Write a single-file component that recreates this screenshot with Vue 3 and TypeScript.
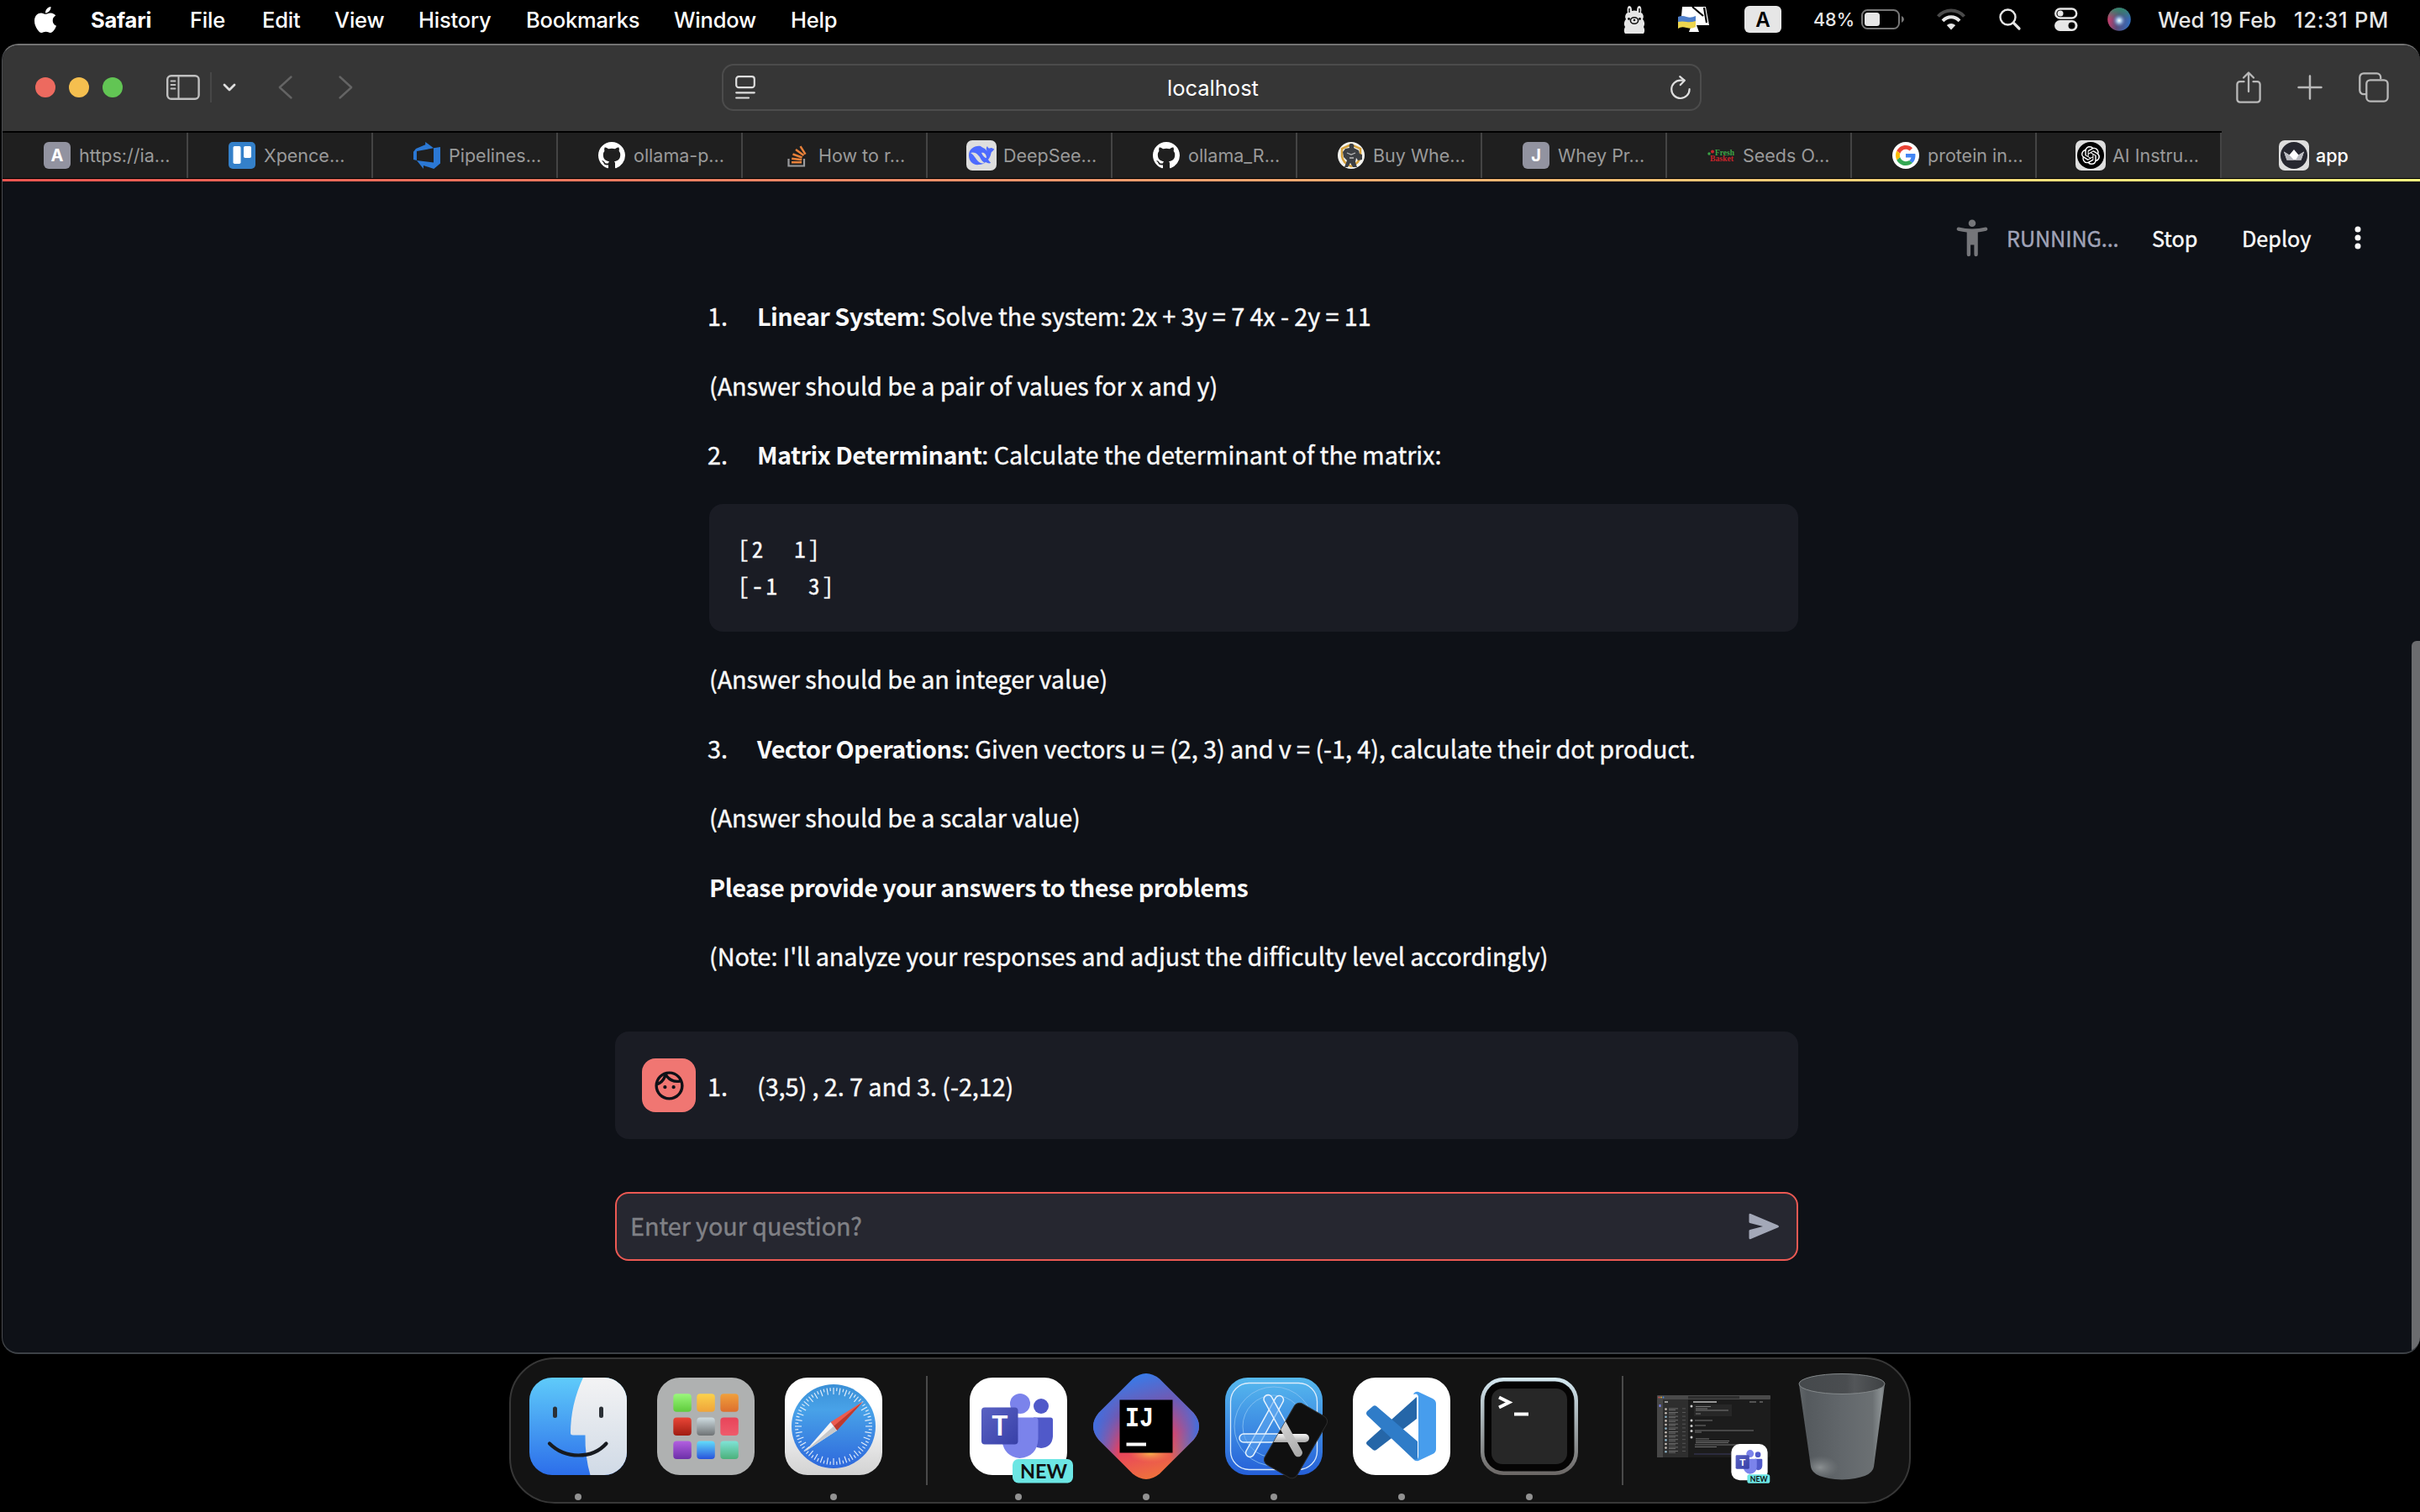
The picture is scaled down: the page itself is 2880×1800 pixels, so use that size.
<script setup lang="ts">
type TabIcon = 'letter' | 'trello' | 'azure' | 'github' | 'stack' | 'deepseek' | 'gym' | 'fresh' | 'google' | 'openai' | 'crown'

interface Tab {
  title: string
  icon: TabIcon
  letter?: string
  active?: boolean
}

const menus: string[] = ['Safari', 'File', 'Edit', 'View', 'History', 'Bookmarks', 'Window', 'Help']

const tabs: Tab[] = [
  { title: 'https://ia...', icon: 'letter', letter: 'A' },
  { title: 'Xpence...', icon: 'trello' },
  { title: 'Pipelines...', icon: 'azure' },
  { title: 'ollama-p...', icon: 'github' },
  { title: 'How to r...', icon: 'stack' },
  { title: 'DeepSee...', icon: 'deepseek' },
  { title: 'ollama_R...', icon: 'github' },
  { title: 'Buy Whe...', icon: 'gym' },
  { title: 'Whey Pr...', icon: 'letter', letter: 'J' },
  { title: 'Seeds O...', icon: 'fresh' },
  { title: 'protein in...', icon: 'google' },
  { title: 'AI Instru...', icon: 'openai' },
  { title: 'app', icon: 'crown', active: true },
]

const ticks = Array.from({ length: 72 }, (_, i) => ({ angle: i * 5, long: i % 2 === 0 }))

const launchColors: [string, string][] = [
  ['#9bf77c', '#5fcb3c'], ['#fbd24c', '#efa43a'], ['#f0a03c', '#dd6f2e'],
  ['#ea4637', '#a01d12'], ['#cfdde2', '#6f7375'], ['#e8445a', '#ee5b6b'],
  ['#b25fe0', '#6c2fa8'], ['#62dcfb', '#2752dc'], ['#7fe3d6', '#4bb07a'],
]

const matrix = '[2  1]\n[-1  3]'
</script>

<template>
  <div class="desktop">
    <header class="menubar">
      <svg class="apple" viewBox="4 32 376 448" preserveAspectRatio="none"><path fill="#fff" d="M318.7 268.7c-.2-36.7 16.4-64.4 50-84.8-18.8-26.9-47.2-41.7-84.7-44.6-35.5-2.8-74.3 20.7-88.5 20.7-15 0-49.4-19.7-76.4-19.7C63.3 141.2 4 184.8 4 273.5q0 39.3 14.4 81.2c12.8 36.7 59 126.7 107.2 125.2 25.2-.6 43-17.9 75.8-17.9 31.8 0 48.3 17.9 76.4 17.9 48.6-.7 90.4-82.5 102.6-119.3-65.2-30.7-61.7-90-61.7-91.9zm-56.6-164.2c27.3-32.4 24.8-61.9 24-72.5-24.1 1.4-52 16.4-67.9 34.9-17.5 19.8-27.8 44.3-25.6 71.9 26.1 2 49.9-11.4 69.5-34.3z" /></svg>
      <nav class="menus">
        <span v-for="m in menus" :key="m" class="menu">{{ m }}</span>
      </nav>
      <div class="status">
        <svg width="26" height="34" viewBox="0 0 26 34">
          <path fill="#e6e6e6" d="M2 34c-2-3-1-6 0-8-2-3-1-7 1-9C1 13 3 10 5 9 4 5 5 1 7 1c2 0 3 2 3 6q3-1 6 0c0-4 1-6 3-6 2 0 3 4 2 8 2 1 4 4 2 8 2 2 3 6 1 9 1 2 2 5 0 8z" />
          <path d="M7 4v5M19 4v5" stroke="#222" stroke-width="1.6" />
          <ellipse cx="13" cy="18.500" rx="4.600" ry="3.700" fill="none" stroke="#111" stroke-width="1.600" />
          <circle cx="13" cy="18" r="1.300" fill="#111" /><circle cx="6.500" cy="16.500" r="1.400" fill="#111" /><circle cx="19.500" cy="16.500" r="1.400" fill="#111" />
        </svg>
        <svg width="38" height="32" viewBox="0 0 38 32">
          <path fill="#fff" d="M5 1h28l4 22H3z" />
          <path fill="#fff" d="M16 23h6l3 8H13z" />
          <path d="M17 1l13 11M31 2l3 18" stroke="#000" stroke-width="2.200" fill="none" />
          <path fill="#4f7fc9" d="M0 13q5-2 10 0t11-1v7q-5 3-11 1t-10 0z" />
          <path fill="#ecd54e" d="M0 19q5-1 10 0t11-1v7q-5 3-11 1t-10 1z" />
        </svg>
        <span class="input-source">A</span>
        <span class="percent">48%</span>
        <svg width="52" height="24" viewBox="0 0 52 24">
          <rect x="1" y="1" width="44" height="22" rx="6.500" fill="none" stroke="#767676" stroke-width="2" />
          <rect x="4" y="4" width="18" height="16" rx="3.500" fill="#e6e6e6" />
          <path d="M48 8q3 1.500 3 4t-3 4z" fill="#767676" />
        </svg>
        <svg width="34" height="26" viewBox="0 0 34 26" fill="none" stroke-width="4">
          <path d="M1.500 9.500q6.500-7 15.500-7t15.500 7" stroke="#4a4a4a" />
          <path d="M7 14.800q4.500-4.500 10-4.500t10 4.500" stroke="#e6e6e6" />
          <path d="M17 25.500l-5.200-5.600q5.200-4 10.400 0z" fill="#e6e6e6" />
        </svg>
        <svg width="26" height="26" viewBox="0 0 26 26" fill="none" stroke="#e6e6e6">
          <circle cx="10.500" cy="10.500" r="9" stroke-width="2.400" /><path d="M17.200 17.200l6.800 6.800" stroke-width="3.200" stroke-linecap="round" />
        </svg>
        <svg width="28" height="28" viewBox="0 0 28 28">
          <rect x="1.200" y="1.500" width="25" height="11" rx="5.500" fill="none" stroke="#e6e6e6" stroke-width="2.400" /><circle cx="7" cy="7" r="3.500" fill="#e6e6e6" />
          <rect x="0" y="15" width="27.500" height="13" rx="6.500" fill="#e6e6e6" /><circle cx="20.500" cy="21.500" r="4" fill="#000" />
        </svg>
        <svg width="28" height="28" viewBox="0 0 28 28">
          <defs>
            <radialGradient id="siri"><stop offset="0" stop-color="#fff" /><stop offset=".35" stop-color="#a9cdee" stop-opacity=".9" /><stop offset="1" stop-color="#4c6fb0" stop-opacity="0" /></radialGradient>
            <linearGradient id="siribg" x1="0" y1=".4" x2="1" y2=".6"><stop offset="0" stop-color="#d23f6c" /><stop offset=".45" stop-color="#5c4a78" /><stop offset="1" stop-color="#2f6fc0" /></linearGradient>
            <linearGradient id="sirig" x1="0" y1="0" x2="0" y2="1"><stop offset="0" stop-color="#2f8a6c" /><stop offset=".5" stop-color="#2f8a6c" stop-opacity="0" /></linearGradient>
          </defs>
          <circle cx="14" cy="14" r="13.800" fill="url(#siribg)" /><circle cx="14" cy="14" r="13.800" fill="url(#sirig)" /><circle cx="14" cy="15.500" r="8" fill="url(#siri)" />
        </svg>
        <span class="clock">Wed 19 Feb</span>
        <span class="clock time">12:31 PM</span>
      </div>
    </header>

    <section class="window">
      <div class="toolbar">
        <div class="lights"><i class="red" /><i class="yellow" /><i class="green" /></div>
        <div class="nav-tools">
          <svg width="40" height="30" viewBox="0 0 40 30" fill="none" stroke="#c0c0c0"><rect x="1.200" y="1.200" width="37.400" height="27.600" rx="4.500" stroke-width="2.400" /><path d="M14.500 1v28" stroke-width="2" /><path d="M5.500 7.500h5M5.500 12h5M5.500 16.500h5" stroke-width="1.800" stroke-linecap="round" /></svg>
          <i class="rule" />
          <svg width="16" height="10" viewBox="0 0 16 10" fill="none" stroke="#dedede" stroke-width="2.800" stroke-linecap="round" stroke-linejoin="round"><path d="M2 2l6 6 6-6" /></svg>
          <svg class="back" width="17" height="28" viewBox="0 0 17 28" fill="none" stroke="#646464" stroke-width="2.400" stroke-linecap="round" stroke-linejoin="round"><path d="M15.500 1.500L1.800 14l13.700 12.500" /></svg>
          <svg class="fwd" width="17" height="28" viewBox="0 0 17 28" fill="none" stroke="#646464" stroke-width="2.400" stroke-linecap="round" stroke-linejoin="round"><path d="M1.500 1.500L15.200 14 1.500 26.500" /></svg>
        </div>
        <div class="address">
          <svg width="24" height="28" viewBox="0 0 24 28" fill="none" stroke="#dedede" stroke-width="2.200" stroke-linecap="round"><rect x="1.200" y="1.200" width="21.600" height="13" rx="3" /><path d="M1.200 20.300h21.600M1.200 26.500h14.800" /></svg>
          <span class="host">localhost</span>
          <svg width="24" height="28" viewBox="0 0 24 28" fill="none" stroke="#dedede" stroke-width="2.200" stroke-linecap="round" stroke-linejoin="round"><path d="M22.600 16.200A10.700 10.700 0 1 1 12 5.600h4.500" /><path d="M11.200 1.200l5.600 4.600-5 5.300" /></svg>
        </div>
        <div class="right-tools">
          <svg width="30" height="38" viewBox="0 0 30 38" fill="none" stroke="#b9b9b9" stroke-width="2.300" stroke-linecap="round" stroke-linejoin="round"><path d="M9.500 12.200H4.700a3.300 3.300 0 0 0-3.300 3.300v17.800a3.300 3.300 0 0 0 3.300 3.300h20.600a3.300 3.300 0 0 0 3.300-3.300V15.500a3.300 3.300 0 0 0-3.300-3.300h-4.800" /><path d="M15 24V1.600M9 7.500l6-6 6 6" /></svg>
          <svg class="plus" width="30" height="30" viewBox="0 0 30 30" stroke="#b9b9b9" stroke-width="2.500" stroke-linecap="round"><path d="M15 1.500v27M1.500 15h27" /></svg>
          <svg width="36" height="36" viewBox="0 0 36 36" fill="none" stroke="#b9b9b9" stroke-width="2.300"><path d="M9 26.200H6A4.600 4.600 0 0 1 1.300 21.600V6A4.600 4.600 0 0 1 6 1.300h15.600A4.600 4.600 0 0 1 26.200 6v2" /><rect x="9.300" y="9.300" width="25.300" height="25.300" rx="4.500" /></svg>
        </div>
      </div>

      <div class="tabs">
        <div v-for="(t, i) in tabs" :key="i" class="tab" :class="{ active: t.active }">
          <span v-if="t.icon === 'letter'" class="fav letter">{{ t.letter }}</span>
          <svg v-else-if="t.icon === 'trello'" class="fav" viewBox="0 0 32 32"><rect width="32" height="32" rx="5" fill="#3480c9" /><rect x="5.500" y="5" width="9" height="21" rx="1.800" fill="#fff" /><rect x="18" y="5" width="9" height="14" rx="1.800" fill="#fff" /></svg>
          <svg v-else-if="t.icon === 'azure'" class="fav" viewBox="0 0 24 24"><path fill="#2b78d4" d="M0 8.877L2.247 5.910l8.405-3.416V.022l7.370 5.393L2.966 8.338v8.225L0 15.707zm24-4.450v14.651l-5.753 4.900-9.303-3.057v3.056l-5.978-7.416 15.057 1.798V5.415z" /></svg>
          <svg v-else-if="t.icon === 'github'" class="fav" viewBox="0 0 16 16"><path fill="#fff" d="M8 0C3.580 0 0 3.580 0 8c0 3.540 2.290 6.530 5.470 7.590.4.070.55-.170.55-.380 0-.190-.010-.820-.010-1.490-2.010.370-2.530-.490-2.690-.940-.090-.230-.480-.940-.820-1.130-.280-.150-.680-.520-.010-.530.630-.010 1.080.580 1.230.820.720 1.210 1.870.870 2.330.660.070-.520.280-.870.510-1.070-1.780-.200-3.640-.890-3.640-3.950 0-.870.310-1.590.820-2.150-.080-.200-.360-1.020.080-2.120 0 0 .670-.210 2.200.820.640-.180 1.320-.270 2-.270.680 0 1.360.090 2 .270 1.530-1.040 2.200-.820 2.200-.820.440 1.100.160 1.920.080 2.120.510.560.820 1.270.820 2.150 0 3.070-1.870 3.750-3.650 3.950.290.250.540.730.540 1.480 0 1.070-.010 1.930-.010 2.200 0 .210.150.460.550.380A8.013 8.013 0 0 0 16 8c0-4.420-3.580-8-8-8z" /></svg>
          <svg v-else-if="t.icon === 'stack'" class="fav" viewBox="0 0 32 32"><path d="M6.500 20v8.500h18.500V20" fill="none" stroke="#9a9b9e" stroke-width="2.200" /><path d="M10 24.300h12M10.200 19.700l12 1.600M11.500 14.500l11 4M15 9l9.500 7M20.500 5.200l6 9.500" stroke="#e8813a" stroke-width="2.500" /></svg>
          <svg v-else-if="t.icon === 'deepseek'" class="fav big" viewBox="0 0 36 36"><rect width="36" height="36" rx="7" fill="#dedede" /><path fill="#4d6bfe" d="M33 10c-2 0-2-1.500-4-1-1 1-3 1-4-2-1 1-2 3 0 6l-3-3c-2-1-4-2-5-3-7-1-14 3-14 11 0 7 5 12 12 11 3 0 6-1 8-3 2 1 4 2 6 1 0-1-2-2-3-4 3-3 3-7 4-9 2-1 3-3 3-4z" /><path fill="#dedede" d="M5 15c5-2 9 2 11 5 2 4 4 6 6 7-3 1-6 0-8-2-3-3-5-8-9-10zM18 15c3-1 6 2 6 6-2 0-4-2-6-6z" /></svg>
          <svg v-else-if="t.icon === 'gym'" class="fav" viewBox="0 0 32 32"><circle cx="16" cy="16" r="16" fill="#f3f3ef" /><path d="M16 3L5 8v9q1 8 11 12 10-4 11-12V8z" fill="none" stroke="#d6a23c" stroke-width="2.500" /><path fill="#3c3f43" d="M16 2c3 0 4 2 3 5l6 3 1 4 3 1v6l-5 1-2-3-1 5 2 6h-5l-3-5-3 5H8l3-8-4-4-1-6 3-4 5-1c-1-3 0-5 2-5z" /><path d="M11 13l5 2 5-2M14 19h5" stroke="#bdbdbd" stroke-width="1.300" fill="none" /></svg>
          <svg v-else-if="t.icon === 'fresh'" class="fav" viewBox="0 0 32 32"><text x="9" y="16" font-size="11" font-weight="800" fill="#3ca447" textLength="23" lengthAdjust="spacingAndGlyphs" class="serif">Fresh</text><text x="3" y="23" font-size="11" font-weight="800" fill="#c8242b" textLength="28" lengthAdjust="spacingAndGlyphs" class="serif">Basket</text><circle cx="2" cy="14" r="1.700" fill="#3ca447" /><circle cx="6" cy="11.500" r="2" fill="#c8242b" /></svg>
          <svg v-else-if="t.icon === 'google'" class="fav" viewBox="0 0 32 32"><circle cx="16" cy="16" r="16" fill="#fff" /><g transform="translate(4 4) scale(.5)"><path fill="#EA4335" d="M24 9.500c3.540 0 6.710 1.220 9.210 3.600l6.850-6.850C35.900 2.380 30.470 0 24 0 14.620 0 6.510 5.380 2.560 13.220l7.980 6.190C12.430 13.720 17.740 9.500 24 9.500z" /><path fill="#4285F4" d="M46.980 24.550c0-1.570-.15-3.090-.38-4.550H24v9.020h12.940c-.58 2.960-2.260 5.480-4.780 7.180l7.730 6c4.510-4.180 7.090-10.360 7.090-17.650z" /><path fill="#FBBC05" d="M10.530 28.590c-.48-1.450-.76-2.990-.76-4.590s.27-3.140.76-4.590l-7.980-6.190C.92 16.460 0 20.120 0 24c0 3.880.92 7.540 2.560 10.780l7.970-6.190z" /><path fill="#34A853" d="M24 48c6.480 0 11.930-2.130 15.890-5.810l-7.730-6c-2.150 1.450-4.920 2.300-8.160 2.300-6.260 0-11.570-4.220-13.470-9.910l-7.980 6.190C6.510 42.620 14.620 48 24 48z" /></g></svg>
          <svg v-else-if="t.icon === 'openai'" class="fav big" viewBox="0 0 36 36"><rect width="36" height="36" rx="7" fill="#dedede" /><circle cx="18" cy="18" r="16" fill="#000" /><g transform="translate(7 7) scale(.917)"><path fill="#fff" d="M22.2819 9.8211a5.9847 5.9847 0 0 0-.5157-4.9108 6.0462 6.0462 0 0 0-6.5098-2.9A6.0651 6.0651 0 0 0 4.9807 4.1818a5.9847 5.9847 0 0 0-3.9977 2.9 6.0462 6.0462 0 0 0 .7427 7.0966 5.98 5.98 0 0 0 .511 4.9107 6.051 6.051 0 0 0 6.5146 2.9001A5.9847 5.9847 0 0 0 13.2599 24a6.0557 6.0557 0 0 0 5.7718-4.2058 5.9894 5.9894 0 0 0 3.9977-2.9001 6.0557 6.0557 0 0 0-.7475-7.0729zm-9.022 12.6081a4.4755 4.4755 0 0 1-2.8764-1.0408l.1419-.0804 4.7783-2.7582a.7948.7948 0 0 0 .3927-.6813v-6.7369l2.02 1.1686a.071.071 0 0 1 .038.052v5.5826a4.504 4.504 0 0 1-4.4945 4.4944zm-9.6607-4.1254a4.4708 4.4708 0 0 1-.5346-3.0137l.142.0852 4.783 2.7582a.7712.7712 0 0 0 .7806 0l5.8428-3.3685v2.3324a.0804.0804 0 0 1-.0332.0615L9.74 19.9502a4.4992 4.4992 0 0 1-6.1408-1.6464zM2.3408 7.8956a4.485 4.485 0 0 1 2.3655-1.9728V11.6a.7664.7664 0 0 0 .3879.6765l5.8144 3.3543-2.0201 1.1685a.0757.0757 0 0 1-.071 0l-4.8303-2.7865A4.504 4.504 0 0 1 2.3408 7.872zm16.5963 3.8558L13.1038 8.364 15.1192 7.2a.0757.0757 0 0 1 .071 0l4.8303 2.7913a4.4944 4.4944 0 0 1-.6765 8.1042v-5.6772a.79.79 0 0 0-.407-.667zm2.0107-3.0231l-.142-.0852-4.7735-2.7818a.7759.7759 0 0 0-.7854 0L9.409 9.2297V6.8974a.0662.0662 0 0 1 .0284-.0615l4.8303-2.7866a4.4992 4.4992 0 0 1 6.6802 4.66zM8.3065 12.863l-2.02-1.1638a.0804.0804 0 0 1-.038-.0567V6.0742a4.4992 4.4992 0 0 1 7.3757-3.4537l-.142.0805L8.704 5.459a.7948.7948 0 0 0-.3927.6813zm1.0976-2.3654l2.602-1.4998 2.6069 1.4998v2.9994l-2.5974 1.4997-2.6067-1.4997Z" /></g></svg>
          <svg v-else class="fav big" viewBox="0 0 36 36"><rect width="36" height="36" rx="7" fill="#dedede" /><circle cx="18" cy="18" r="16" fill="#262730" /><path fill="#fff" d="M6 13.500l6.500 4L18 11l5.500 6.500 6.500-4L26.500 23.500h-17z" /><path fill="#b9bac0" d="M6 13.500l6.500 4L18 23.500H9.500zM30 13.500l-6.500 4L20 23.500h6.500z" /></svg>
          <span class="title">{{ t.title }}</span>
        </div>
      </div>

      <div class="page">
        <div class="decoration" />
        <div class="app-header">
          <svg class="person" width="38" height="45" viewBox="0 0 38 45"><circle cx="19" cy="4.700" r="4.300" fill="#75767a" /><path fill="#75767a" d="M3 9.500q16 3.800 32 0a2.200 2.200 0 0 1 .8 4.300q-5 1.300-10 1.700V42a2.200 2.200 0 0 1-4.400 0V30.500h-4.300V42a2.200 2.200 0 0 1-4.400 0V15.500q-5-.4-10.500-1.700A2.200 2.200 0 0 1 3 9.500z" /></svg>
          <span class="running">RUNNING...</span>
          <span class="stop">Stop</span>
          <span class="deploy">Deploy</span>
          <svg width="8" height="28" viewBox="0 0 8 28" fill="#fafafa"><circle cx="4" cy="4" r="3.500" /><circle cx="4" cy="14" r="3.500" /><circle cx="4" cy="24" r="3.500" /></svg>
        </div>

        <main class="chat">
          <div class="md">
            <div class="item l1"><span class="num">1.</span><span><b>Linear System</b>: Solve the system: 2x + 3y = 7 4x - 2y = 11</span></div>
            <p class="l2">(Answer should be a pair of values for x and y)</p>
            <div class="item l3"><span class="num">2.</span><span><b>Matrix Determinant</b>: Calculate the determinant of the matrix:</span></div>
            <pre>{{ matrix }}</pre>
            <p class="after-code">(Answer should be an integer value)</p>
            <div class="item"><span class="num">3.</span><span><b>Vector Operations</b>: Given vectors u = (2, 3) and v = (-1, 4), calculate their dot product.</span></div>
            <p>(Answer should be a scalar value)</p>
            <p><b>Please provide your answers to these problems</b></p>
            <p>(Note: I'll analyze your responses and adjust the difficulty level accordingly)</p>
          </div>

          <div class="user-message">
            <div class="avatar"><svg width="41" height="41" viewBox="0 0 24 24"><path fill="#0e1117" fill-rule="evenodd" d="M10.250 13a1.250 1.250 0 1 1-2.500 0 1.250 1.250 0 0 1 2.500 0zM15 11.750a1.250 1.250 0 1 0 0 2.500 1.250 1.250 0 0 0 0-2.500zm7 .25c0 5.520-4.480 10-10 10S2 17.520 2 12 6.480 2 12 2s10 4.480 10 10zM10.660 4.120C12.060 6.440 14.600 8 17.500 8c.46 0 .91-.05 1.340-.12C17.440 5.560 14.900 4 12 4c-.46 0-.91.05-1.340.12zM4.420 9.470a8.046 8.046 0 0 0 3.660-4.440 8.046 8.046 0 0 0-3.660 4.440zM20 12c0-.78-.12-1.530-.33-2.240-.7.150-1.420.240-2.170.240a9.990 9.990 0 0 1-7.760-3.690A10.016 10.016 0 0 1 4 11.860c.01.040 0 .090 0 .140 0 4.410 3.590 8 8 8s8-3.590 8-8z" /></svg></div>
            <div class="item"><span class="num">1.</span><span>(3,5) , 2. 7 and 3. (-2,12)</span></div>
          </div>

          <div class="ask">
            <span class="placeholder">Enter your question?</span>
            <svg width="37" height="32" viewBox="0 0 37 32"><path fill="#a3a8b8" d="M.5 2.200Q.5.200 2.500 1L34.500 14.400q3 1.600 0 3.200L2.500 31q-2 .8-2-1.200V21.200q0-1 1-1.300L17 16 1.500 12.100q-1-.3-1-1.300z" /></svg>
          </div>
        </main>
        <div class="scroll-thumb" />
      </div>
    </section>

    <footer class="dock">
      <div class="app running-app">
        <svg viewBox="0 0 116 116">
          <defs>
            <linearGradient id="fb" x1="0" y1="0" x2="0" y2="1"><stop offset="0" stop-color="#5fcbfa" /><stop offset="1" stop-color="#2c6eea" /></linearGradient>
            <linearGradient id="fw" x1="0" y1="0" x2="0" y2="1"><stop offset="0" stop-color="#f3f3f4" /><stop offset="1" stop-color="#d0dae6" /></linearGradient>
            <clipPath id="fc"><rect width="116" height="116" rx="27" /></clipPath>
          </defs>
          <g clip-path="url(#fc)">
            <rect width="116" height="116" fill="url(#fb)" />
            <path d="M64 0Q49 32 49 66q0 2.500 3 2.500h14.500Q66 94 72.500 116H116V0z" fill="url(#fw)" />
          </g>
          <path d="M30.500 37v8.500M85.500 37v8.500" stroke="#2b3036" stroke-width="5" stroke-linecap="round" />
          <path d="M24 78.500q14 14 34.500 14t33-14" fill="none" stroke="#171a1f" stroke-width="4.200" stroke-linecap="round" />
        </svg>
      </div>
      <div class="app">
        <svg viewBox="0 0 116 116">
          <defs><linearGradient v-for="(c, i) in launchColors" :id="'lp' + i" :key="i" x1="0" y1="0" x2="0" y2="1"><stop offset="0" :stop-color="c[0]" /><stop offset="1" :stop-color="c[1]" /></linearGradient></defs>
          <rect width="116" height="116" rx="27" fill="#afb1b1" />
          <rect v-for="(c, i) in launchColors" :key="i" :x="19.300 + (i % 3) * 28" :y="19.200 + Math.floor(i / 3) * 28.200" width="21.500" height="21.500" rx="4" :fill="'url(#lp' + i + ')'" />
        </svg>
      </div>
      <div class="app running-app">
        <svg viewBox="0 0 116 116">
          <defs>
            <linearGradient id="sw" x1="0" y1="0" x2="0" y2="1"><stop offset=".3" stop-color="#fff" /><stop offset="1" stop-color="#d2d2d2" /></linearGradient>
            <linearGradient id="sb" x1="0" y1="0" x2="0" y2="1"><stop offset="0" stop-color="#3a8fd6" /><stop offset=".3" stop-color="#48a2e8" /><stop offset="1" stop-color="#2e68dc" /></linearGradient>
          </defs>
          <rect width="116" height="116" rx="27" fill="url(#sw)" />
          <circle cx="58" cy="58" r="50" fill="url(#sb)" />
          <g stroke="#e8f1fb" stroke-width="1.100"><line v-for="t in ticks" :key="t.angle" x1="58" y1="12" x2="58" :y2="t.long ? 20 : 16" :transform="`rotate(${t.angle} 58 58)`" /></g>
          <path d="M93 28.500L54.500 53 62 63z" fill="#ec5c50" /><path d="M93 28.500L62 63 58 58z" fill="#bd3a2f" />
          <path d="M24 88L54.500 53 62 63z" fill="#f4f4f4" /><path d="M24 88L62 63 58 58z" fill="#c6c8cb" />
        </svg>
      </div>
      <i class="divider" />
      <div class="app running-app">
        <svg viewBox="0 0 116 116">
          <defs><linearGradient id="tm" x1="0" y1="0" x2="1" y2="1"><stop offset="0" stop-color="#5a62c3" /><stop offset="1" stop-color="#3840a8" /></linearGradient></defs>
          <g id="teams-badge">
            <rect width="116" height="116" rx="27" fill="#fff" />
            <circle cx="85" cy="34" r="9" fill="#5059c9" /><path d="M76 47.500h20a3 3 0 0 1 3 3V70q-1 13-14 14-9-1-11-8z" fill="#5059c9" />
            <circle cx="60" cy="31" r="12" fill="#7b83eb" /><path d="M42 47.500h36a3.500 3.500 0 0 1 3.500 3.500v22q-1 21-22 23-18-2-21-20z" fill="#7b83eb" />
            <rect x="14" y="35.500" width="43.500" height="44" rx="4" fill="url(#tm)" />
            <text x="35.800" y="69" text-anchor="middle" font-size="32" font-weight="700" fill="#fff" class="sans">T</text>
            <rect x="51" y="97" width="72" height="28.500" rx="7" fill="#6ce6e4" />
            <text x="60" y="119.700" font-size="23.500" font-weight="700" fill="#101010" textLength="56" lengthAdjust="spacingAndGlyphs" class="sans">NEW</text>
          </g>
        </svg>
      </div>
      <div class="app running-app">
        <svg viewBox="0 0 116 116">
          <defs>
            <linearGradient id="ij" x1=".3" y1="0" x2=".6" y2="1"><stop offset="0" stop-color="#2f80f2" /><stop offset=".35" stop-color="#7358b0" /><stop offset=".65" stop-color="#e8415f" /><stop offset="1" stop-color="#f0743a" /></linearGradient>
            <linearGradient id="ijb" x1="1" y1="0" x2="0" y2="0"><stop offset="0" stop-color="#3f6fe0" /><stop offset=".28" stop-color="#3f6fe0" stop-opacity="0" /><stop offset=".75" stop-color="#3f6fe0" stop-opacity="0" /><stop offset="1" stop-color="#3f6fe0" /></linearGradient>
            <radialGradient id="ijy"><stop offset="0" stop-color="#f7b24a" /><stop offset="1" stop-color="#f7824a" stop-opacity="0" /></radialGradient>
          </defs>
          <path d="M42 1.500q16-13 32 0L114.500 42q13 16 0 32L74 114.500q-16 13-32 0L1.500 74q-13-16 0-32z" fill="url(#ij)" />
          <path d="M42 1.500q16-13 32 0L114.500 42q13 16 0 32L74 114.500q-16 13-32 0L1.500 74q-13-16 0-32z" fill="url(#ijb)" />
          <ellipse cx="63" cy="90" rx="26" ry="11" fill="url(#ijy)" />
          <rect x="26.500" y="26.500" width="63" height="63" fill="#000" />
          <text x="33" y="58" font-size="33" font-weight="700" fill="#fff" textLength="34" lengthAdjust="spacingAndGlyphs" class="mono">IJ</text>
          <rect x="34.500" y="77.500" width="23.500" height="4" fill="#fff" />
        </svg>
      </div>
      <div class="app running-app">
        <svg viewBox="0 0 116 116">
          <defs>
            <linearGradient id="xc" x1="0" y1="0" x2="0" y2="1"><stop offset="0" stop-color="#56b9ee" /><stop offset="1" stop-color="#255fd8" /></linearGradient>
            <linearGradient id="xm" x1="0" y1="0" x2="0" y2="1"><stop offset="0" stop-color="#f5f5f5" /><stop offset="1" stop-color="#a9a9a9" /></linearGradient>
            <clipPath id="phone"><rect x="-22" y="-42" width="44" height="84" rx="7" transform="translate(84 75) rotate(30)" /></clipPath>
          </defs>
          <rect width="116" height="116" rx="27" fill="url(#xc)" />
          <rect x="6.500" y="6.500" width="103" height="103" rx="22" fill="none" stroke="#dcecfb" stroke-width="1.300" />
          <g fill="none" stroke="#8cc4f3" stroke-width=".8"><circle cx="58" cy="58" r="47" /><circle cx="58" cy="58" r="37" /></g>
          <g fill="#5ea6ee" fill-opacity=".55" stroke="#e6f2fd" stroke-width="1.500">
            <rect x="-5" y="-41" width="10" height="82" rx="5" transform="translate(47 58) rotate(29)" />
            <rect x="-5" y="-42" width="10" height="84" rx="5" transform="translate(69 58) rotate(-29)" />
            <rect x="17" y="67" width="82" height="10" rx="5" />
          </g>
          <rect x="-22" y="-42" width="44" height="84" rx="7" transform="translate(84 75) rotate(30)" fill="#101010" stroke="#2c2c2c" />
          <g clip-path="url(#phone)" fill="url(#xm)">
            <rect x="17" y="67" width="83" height="10" rx="5" />
            <rect x="-5" y="-42" width="10" height="84" rx="5" transform="translate(69 57) rotate(-29)" />
          </g>
        </svg>
      </div>
      <div class="app running-app">
        <svg viewBox="0 0 116 116">
          <rect width="116" height="116" rx="27" fill="#fff" />
          <path d="M76 23v26L28 86q-2 1.500-4 0l-7-6q-2-2 0-4z" fill="#2566a8" />
          <path d="M17 40l7-6q2-1.500 4 0l49 42v22q-3 1-5-1L17 45q-2-2.500 0-5z" fill="#2f7cc8" />
          <path d="M72 20q2-4 6-3l17 8q4 2 4 6v54q0 4-4 6l-17 8q-4 1-6-2 6 2 6-4V24q0-6-6-4z" fill="#479ded" />
        </svg>
      </div>
      <div class="app running-app">
        <svg viewBox="0 0 116 116">
          <defs><linearGradient id="tr" x1="0" y1="0" x2="0" y2="1"><stop offset="0" stop-color="#d4e8f1" /><stop offset="1" stop-color="#6b6765" /></linearGradient></defs>
          <rect width="116" height="116" rx="27" fill="url(#tr)" /><rect x="4.500" y="4.500" width="107" height="107" rx="23" fill="#050404" /><rect x="13" y="13" width="90" height="90" rx="13" fill="#272727" />
          <path d="M22 23.500l12 6-12 6" fill="none" stroke="#fff" stroke-width="4" /><path d="M40 43.500h17" stroke="#fff" stroke-width="4" />
        </svg>
      </div>
      <i class="divider" />
      <div class="app">
        <svg viewBox="0 0 116 116">
          <rect x="-10" y="21" width="135" height="74" rx="2" fill="#1c1c1c" />
          <rect x="-10" y="21" width="135" height="5" rx="1" fill="#4a4a4a" /><rect x="27" y="22" width="61" height="3" fill="#2e2e2e" />
          <rect x="-10" y="26" width="7" height="69" fill="#474747" /><rect x="-3" y="26" width="30" height="69" fill="#2e2e2e" />
          <circle cx="-7.500" cy="23.500" r="1" fill="#e0564d" /><circle cx="-5" cy="23.500" r="1" fill="#d7a33b" /><circle cx="-2.500" cy="23.500" r="1" fill="#4b8de0" />
          <rect x="-7.500" y="32" width="2" height="3" fill="#7b83eb" />
          <g v-for="n in 12" :key="n"><circle :cx="0.500" :cy="33 + n * 4.600" r="1.300" :fill="n % 3 === 0 ? '#8fb4c8' : '#c9c0b8'" /><path :d="`M4 ${32.300 + n * 4.600}h11M4 ${34 + n * 4.600}h8`" stroke="#7c7c7c" stroke-width=".8" /><path :d="`M20 ${32.300 + n * 4.600}h4`" stroke="#666" stroke-width=".7" /></g>
          <path d="M-1 29h4M33 29h28" stroke="#bdbdbd" stroke-width="1.400" /><path d="M100 29h8M112 29h4" stroke="#888" stroke-width="1" />
          <rect x="34" y="32" width="45" height="14" fill="#272727" /><path d="M36 34.500h18M36 37h14M36 39h39M36 43h6" stroke="#858585" stroke-width=".9" />
          <circle cx="31" cy="34" r="1.500" fill="#ccc" /><circle cx="31" cy="51" r="1.500" fill="#ccc" /><circle cx="31" cy="57.500" r="1.500" fill="#ccc" /><circle cx="31" cy="63.500" r="1.500" fill="#ccc" /><circle cx="31" cy="71" r="1.500" fill="#ccc" />
          <path d="M35 51h21M35 57h13M35 63h70M35 65h8M36 73h16M36 75.500h40M36 77.500h39M35 80h55M35 82.500h26" stroke="#7d7d7d" stroke-width=".9" /><path d="M34 91h44" stroke="#30304a" stroke-width="1.500" />
        </svg>
        <svg class="mini-badge" viewBox="0 0 124 126"><use href="#teams-badge" /></svg>
      </div>
      <div class="app">
        <svg viewBox="0 0 116 116">
          <defs>
            <linearGradient id="bin" x1="0" y1="0" x2="1" y2="0"><stop offset="0" stop-color="#62676a" /><stop offset=".1" stop-color="#555a5e" /><stop offset=".5" stop-color="#62676b" /><stop offset=".85" stop-color="#6b7073" /><stop offset=".95" stop-color="#8a9092" /><stop offset="1" stop-color="#6d7274" /></linearGradient>
            <linearGradient id="rim" x1="0" y1="0" x2="1" y2="0"><stop offset="0" stop-color="#45494c" /><stop offset=".55" stop-color="#4a4d50" /><stop offset=".65" stop-color="#535659" /><stop offset="1" stop-color="#3e4143" /></linearGradient>
            <radialGradient id="glow"><stop offset="0" stop-color="#a6aaab" stop-opacity=".65" /><stop offset="1" stop-color="#8a8f91" stop-opacity="0" /></radialGradient>
            <clipPath id="binclip"><path d="M7 8l14 98q2 14 37 15.500 36-1.500 38-15.500L109 8z" /></clipPath>
          </defs>
          <g clip-path="url(#binclip)">
            <rect x="6" y="7" width="104" height="118" fill="url(#bin)" />
            <ellipse cx="32" cy="107" rx="22" ry="14" fill="url(#glow)" />
          </g>
          <ellipse cx="58" cy="7.500" rx="51" ry="12" fill="url(#rim)" stroke="#84898b" stroke-width="1" />
        </svg>
      </div>
    </footer>
  </div>
</template>

<style>
html,
body {
  margin: 0;
  background: #000;
}
</style>

<style scoped>
* {
  box-sizing: border-box;
}
.desktop {
  width: 2880px;
  height: 1800px;
  overflow: hidden;
  background: #000;
  display: flex;
  flex-direction: column;
  font-family: Inter, 'Liberation Sans', sans-serif;
}
svg {
  display: block;
  flex: none;
  overflow: visible;
}
.menubar {
  height: 46px;
  margin-bottom: 6px;
  display: flex;
  align-items: center;
  padding-left: 41px;
  color: #fff;
  font-size: 25.5px;
  font-weight: 500;
  white-space: nowrap;
}
.apple {
  width: 26px;
  height: 31px;
}
.menus {
  margin-left: 41px;
  width: 1000px;
  display: grid;
  grid-template-columns: 118px 86px 86px 100px 128px 176px 139px 1fr;
  letter-spacing: -0.2px;
}
.menu:first-child {
  font-weight: 700;
}
.status {
  margin-left: 824px;
  display: grid;
  grid-template-columns: 65px 79px 82px 57px 90px 74px 66px 63px 60px 162px 140px;
  align-items: center;
  color: #e6e6e6;
}
.input-source {
  width: 44px;
  height: 32px;
  border-radius: 6px;
  background: #e6e6e6;
  color: #000;
  font-size: 24px;
  font-weight: 600;
  line-height: 33px;
  text-align: center;
}
.percent {
  font-size: 21.5px;
}
.clock {
  letter-spacing: 0.1px;
}
.time {
  letter-spacing: 0.75px;
}
.window {
  height: 1560px;
  margin-left: 2px;
  border-top: 2px solid #737373;
  border-bottom: 2px solid #3d4146;
  border-left: 1px solid #4a4c50;
  border-radius: 20px;
  overflow: hidden;
  background: #0e1117;
  display: flex;
  flex-direction: column;
}
.toolbar {
  height: 102px;
  flex: none;
  background: #363636;
  display: flex;
  align-items: center;
  padding: 0 0 2px 39px;
}
.lights {
  display: flex;
  gap: 16px;
}
.lights i {
  width: 24px;
  height: 24px;
  border-radius: 50%;
}
.red { background: #ed6a5f; }
.yellow { background: #f5bf4f; }
.green { background: #62c554; }
.nav-tools {
  display: flex;
  align-items: center;
  margin-left: 52px;
  width: 661px;
}
.rule {
  width: 2px;
  height: 36px;
  background: #474747;
  margin: 0 13px 0 12px;
}
.back { margin-left: 50px; }
.fwd { margin-left: 55px; }
.address {
  width: 1166px;
  height: 56px;
  border: 2px solid #4c4c4c;
  border-radius: 14px;
  display: flex;
  align-items: center;
  justify-content: space-between;
  padding: 0 11px 0 14px;
  color: #fff;
  font-size: 25.5px;
}
.right-tools {
  margin-left: 636px;
  display: flex;
  align-items: center;
  gap: 43px;
}
.plus {
  margin-bottom: 1px;
}
.tabs {
  height: 57px;
  flex: none;
  display: flex;
  border-top: 2px solid #000;
  border-bottom: 1px solid #000;
  background: #1f1f1f;
}
.tab {
  width: 220px;
  flex: none;
  border-right: 2px solid #444;
  display: flex;
  align-items: center;
  justify-content: flex-end;
  color: #9a9a9a;
  font-size: 21.5px;
}
.tab:first-child {
  width: 221px;
}
.tab .title {
  width: 128px;
  margin-left: 8px;
  white-space: nowrap;
}
.tab.active {
  width: 236px;
  border: 0;
  background: #363636;
  color: #fff;
  font-weight: 500;
  margin-top: -2px;
  padding-top: 2px;
}
.tab.active .title {
  width: 124px;
}
.fav {
  width: 32px;
  height: 32px;
  margin-right: 2px;
}
.fav.big {
  width: 36px;
  height: 36px;
  margin-right: 0;
}
.letter {
  border-radius: 6px;
  background: #9293a0;
  color: #fff;
  font-size: 20px;
  font-weight: 700;
  line-height: 33px;
  text-align: center;
}
.page {
  position: relative;
  flex: 1;
  font-family: 'Noto Sans CJK SC', 'Noto Sans', sans-serif;
  color: #fafafa;
  -webkit-text-stroke: 0.4px currentColor;
}
.decoration {
  height: 3px;
  background: linear-gradient(90deg, #eb5550, #f0986c 45%, #fbfa80);
}
.app-header {
  display: flex;
  align-items: center;
  height: 46px;
  margin-top: 44px;
  padding-left: 2325px;
  font-size: 25.2px;
  line-height: 46px;
  white-space: nowrap;
}
.running {
  color: #a0a3b8;
  width: 173px;
  margin-left: 22px;
  letter-spacing: -0.1px;
}
.stop { width: 107px; }
.deploy { width: 134px; }
.chat {
  width: 1408px;
  margin-left: 729px;
  padding-top: 45px;
  font-size: 28.8px;
  letter-spacing: -0.07px;
}
.md {
  padding-left: 112px;
}
.md p,
.md .item {
  height: 50px;
  line-height: 50px;
  margin: 0 0 32.5px;
  white-space: nowrap;
}
.item {
  display: flex;
  line-height: 50px;
}
.num {
  width: 59px;
  margin-left: -2px;
  flex: none;
}
b {
  font-weight: 700;
  letter-spacing: -0.57px;
  -webkit-text-stroke: 0;
}
pre {
  margin: 34px 0 31px;
  height: 152px;
  border-radius: 16px;
  background: #1a1c24;
  padding: 31px 32px 32px 34px;
  font-family: 'Noto Sans Mono CJK SC', 'DejaVu Sans Mono', monospace;
  font-size: 27px;
  letter-spacing: 3.3px;
  line-height: 44px;
}
.md .l3 {
  margin-bottom: 34px;
}
.user-message {
  margin-top: 65px;
  height: 128px;
  border-radius: 16px;
  background: #1a1c24;
  display: flex;
  align-items: center;
  padding-left: 32px;
}
.user-message .item {
  padding-top: 1px;
}
.md p:last-child {
  margin-bottom: 0;
}
.avatar {
  width: 64px;
  height: 64px;
  border-radius: 16px;
  background: #f07672;
  display: flex;
  align-items: center;
  justify-content: center;
  margin-right: 16px;
}
.ask {
  margin-top: 63px;
  height: 82px;
  border: 2px solid #ec5953;
  border-radius: 16px;
  background: #262730;
  display: flex;
  align-items: center;
  justify-content: space-between;
  padding: 0 20px 0 16px;
}
.placeholder {
  color: #808186;
  padding-bottom: 3px;
}
.scroll-thumb {
  position: absolute;
  right: -2px;
  top: 550px;
  bottom: 0;
  width: 12px;
  border-radius: 6px 0 0 0;
  background: #6b6c6f;
}
.dock {
  margin: 4px 0 0 606px;
  width: 1668px;
  height: 174px;
  border: 2px solid #373737;
  border-radius: 54px;
  background: #131313;
  padding: 22px 22px 0;
  display: flex;
  gap: 36px;
}
.app {
  position: relative;
  width: 116px;
  height: 116px;
  flex: none;
}
.running-app::after {
  content: '';
  display: block;
  width: 8px;
  height: 8px;
  border-radius: 50%;
  background: #929292;
  margin: 22px auto 0;
}
.divider {
  width: 2px;
  height: 130px;
  margin: -2px 14px 0 16px;
  background: #4a4a4a;
}
.mini-badge {
  position: absolute;
  left: 78px;
  top: 79px;
  width: 47px;
  height: 47px;
}
.sans { font-family: Lato, 'Noto Sans', sans-serif; }
.serif { font-family: 'Liberation Serif', serif; }
.mono { font-family: 'Liberation Mono', monospace; }
</style>
